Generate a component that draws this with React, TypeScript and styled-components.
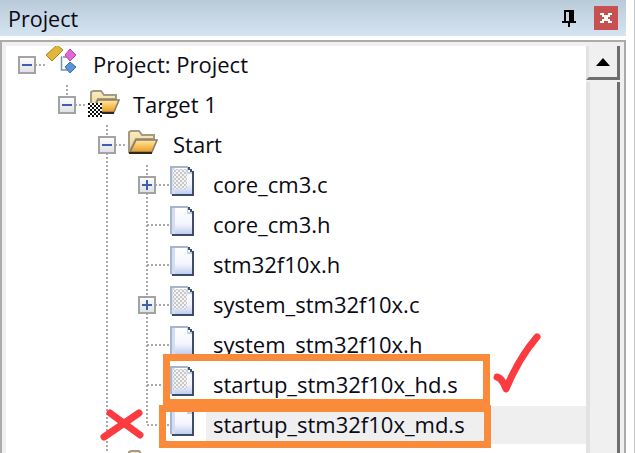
import React from 'react';
import styled, { createGlobalStyle } from 'styled-components';

const GlobalStyle = createGlobalStyle`
  html, body {
    margin: 0;
    padding: 0;
    overflow: hidden;
    background: #fff;
  }
`;

const dots = '#aaaaaa';
const vDots = `repeating-linear-gradient(to bottom, ${dots} 0 2px, transparent 2px 4px)`;
const hDots = `repeating-linear-gradient(to right, ${dots} 0 2px, transparent 2px 4px)`;

const Page = styled.div`
  position: relative;
  box-sizing: border-box;
  width: 635px;
  height: 453px;
  overflow: hidden;
  padding-right: 8px;
  border-right: 1px solid #c4c4c4;
  font-family: 'Open Sans', 'Liberation Sans', sans-serif;
  color: #0a0a14;
`;

const Frame = styled.div`
  display: flex;
  flex-direction: column;
  height: 100%;
`;

const TitleBar = styled.div`
  display: flex;
  align-items: center;
  flex: 0 0 36px;
  padding: 0 8px;
  background: linear-gradient(to bottom, #b9cad9, #d6e4f1);
  font-size: 21.5px;
`;

const Title = styled.span`
  flex: 1;
`;

const PinButton = styled.span`
  display: flex;
  margin-right: 18px;
`;

const CloseButton = styled.span`
  display: flex;
  align-items: center;
  justify-content: center;
  width: 24px;
  height: 24px;
  background: #c75050;
`;

const Panel = styled.div`
  display: flex;
  flex: 1;
  min-height: 0;
  margin-top: 4px;
  padding: 4px 4px 0;
  border: solid #ababab;
  border-width: 2px 2px 0;
  background: #f0f0f0;
`;

const Tree = styled.div`
  flex: 1;
  overflow: hidden;
  background: #fff;
`;

const RowList = styled.div`
  margin-top: -1px;
`;

const Row = styled.div`
  display: flex;
  align-items: center;
  height: 40px;
  padding-left: 1px;
`;

const Indent = styled.div<{ $line?: boolean }>`
  flex: 0 0 40px;
  align-self: stretch;
  background: ${p => (p.$line ? `${vDots} center / 2px 100% no-repeat` : 'none')};
`;

const Connector = styled.div<{ $kind: 'root' | 'tee' | 'last' }>`
  display: flex;
  align-items: center;
  justify-content: center;
  flex: 0 0 40px;
  align-self: stretch;
  background:
    ${hDots} right center / 20px 2px no-repeat,
    ${p =>
      p.$kind === 'root'
        ? 'none'
        : p.$kind === 'tee'
          ? `${vDots} center / 2px 100% no-repeat`
          : `${vDots} center top / 2px 50% no-repeat`};
`;

const Expander = styled.span`
  box-sizing: border-box;
  display: flex;
  align-items: center;
  justify-content: center;
  width: 18px;
  height: 18px;
  border: 2px solid #a3a3a3;
  background: linear-gradient(to bottom, #fdfdfd, #dfe1e4);
`;

const IconSlot = styled.div<{ $stub?: boolean }>`
  display: flex;
  flex: 0 0 39px;
  align-self: stretch;
  box-sizing: border-box;
  align-items: flex-start;
  padding-top: ${p => (p.$stub ? 1 : 5)}px;
  padding-left: ${p => (p.$stub ? 3 : 1)}px;
  background: ${p => (p.$stub ? `${hDots} left center / 3px 2px no-repeat` : 'none')};
`;

const ProjectSlot = styled(IconSlot)`
  padding-top: 0;
  padding-left: 0;
  margin-left: -1px;
  margin-right: 1px;
`;

const Label = styled.div<{ $selected?: boolean }>`
  flex: 1;
  height: 38px;
  padding-left: 7px;
  line-height: 36px;
  font-size: 22px;
  white-space: nowrap;
  background: ${p => (p.$selected ? '#efefef' : 'transparent')};
`;

const ScrollBar = styled.div`
  display: flex;
  flex-direction: column;
  flex: 0 0 34px;
  background: #f0f0f0;
`;

const ArrowButton = styled.div`
  display: flex;
  align-items: center;
  justify-content: center;
  flex: 0 0 34px;
  box-sizing: border-box;
  border: solid #e2e2e2;
  border-width: 0 0 0 3px;
  border-right: 3px solid #6e6e6e;
  border-bottom: 3px solid #6e6e6e;
`;

const Track = styled.div`
  flex: 1;
  margin-top: 2px;
  box-sizing: border-box;
  border-left: 4px solid #e2e2e2;
  border-right: 3px solid #6e6e6e;
`;

const FirstBox = styled.div`
  position: absolute;
  box-sizing: border-box;
  left: 163px;
  top: 354px;
  width: 327px;
  height: 52px;
  border: 7px solid #f98b3a;
`;

const SecondBox = styled.div`
  position: absolute;
  box-sizing: border-box;
  left: 159px;
  top: 405px;
  width: 332px;
  height: 43px;
  border: 7px solid #f98b3a;
`;

const Mark = styled.svg`
  position: absolute;
  left: 0;
  top: 0;
  pointer-events: none;
`;

const Minus = () => (
  <svg width="10" height="10" viewBox="0 0 10 10">
    <rect y="4" width="10" height="2" fill="#3f5fae" />
  </svg>
);

const Plus = () => (
  <svg width="10" height="10" viewBox="0 0 10 10">
    <rect y="4" width="10" height="2" fill="#3f5fae" />
    <rect x="4" width="2" height="10" fill="#3f5fae" />
  </svg>
);

const DocIcon = ({ source }: { source?: boolean }) => (
  <svg width="24" height="30" viewBox="0 0 24 30" shapeRendering="crispEdges">
    <defs>
      <linearGradient id="docFill" x1="0" y1="0" x2="0" y2="1">
        <stop offset="0" stopColor="#ffffff" />
        <stop offset="0.6" stopColor="#f4f6fd" />
        <stop offset="1" stopColor="#bcc9ee" />
      </linearGradient>
      <pattern id="dither" width="4" height="4" patternUnits="userSpaceOnUse">
        <rect width="4" height="4" fill="#f4f4f4" />
        <rect width="2" height="2" fill="#c8c8c8" />
        <rect x="2" y="2" width="2" height="2" fill="#c8c8c8" />
      </pattern>
    </defs>
    <path d="M1 1H17L23 7V29H1Z" fill="url(#docFill)" />
    <rect x="2" y="2" width="3" height="26" fill="#d5ddf2" />
    {source && <rect x="3" y="3" width="14" height="20" fill="url(#dither)" />}
    <path d="M0 0H18V2H2V28H0Z" fill="#a6b5cc" />
    <path d="M18 2V6H22V8H17V2Z" fill="#c5d0e6" />
    <path d="M18 1H20V3H22V5H24V30H2V28H22V6H20V4H18Z" fill="#3d4d68" />
  </svg>
);

const FolderIcon = () => (
  <svg width="30" height="24" viewBox="0 0 30 24">
    <defs>
      <linearGradient id="folderBack" x1="0" y1="0" x2="0" y2="1">
        <stop offset="0" stopColor="#fdeebc" />
        <stop offset="1" stopColor="#e6cd92" />
      </linearGradient>
      <linearGradient id="folderFront" x1="0" y1="0" x2="0" y2="1">
        <stop offset="0" stopColor="#ffe9a0" />
        <stop offset="1" stopColor="#f09a1e" />
      </linearGradient>
    </defs>
    <path d="M1 23V2L3 1H11L14 5H26V9H8L1 23Z" fill="url(#folderBack)" stroke="#a39a88" strokeWidth="2" />
    <path d="M8 10H29L24 22H2Z" fill="url(#folderFront)" stroke="#8a7f66" strokeWidth="1.6" />
    <path d="M1 23H24" stroke="#2c2a22" strokeWidth="2" />
  </svg>
);

const TargetIcon = () => (
  <svg width="34" height="28" viewBox="0 0 34 28">
    <g transform="translate(2 0)">
      <FolderIcon />
    </g>
    <g shapeRendering="crispEdges">
      <rect x="0" y="13" width="14" height="13" fill="#fff" />
      {Array.from({ length: 7 }).map((_, r) =>
        Array.from({ length: 7 }).map((_, c) =>
          (r + c) % 2 === 0 ? (
            <rect key={`${r}-${c}`} x={c * 2} y={13 + r * 2} width="2" height="2" fill="#111" />
          ) : null,
        ),
      )}
    </g>
  </svg>
);

const ProjectIcon = () => (
  <svg width="32" height="30" viewBox="0 0 32 30">
    <path d="M15 12H15.5V25H22M17 12H21" fill="none" stroke="#7c8da6" strokeWidth="1.5" />
    <path d="M0 10L11 0L17 5L6 16Z" fill="#e3b63a" stroke="#a88420" strokeWidth="1" />
    <path d="M24 4L30 10L24 16L19 10Z" fill="#e267d8" stroke="#b24aa8" strokeWidth="1" />
    <path d="M24 17L30 22L24 28L19 22Z" fill="#5b93dc" stroke="#3c6cb0" strokeWidth="1" />
  </svg>
);

const PinIcon = () => (
  <svg width="14" height="17" viewBox="0 0 14 17" shapeRendering="crispEdges">
    <path d="M2 0H12V11H14V13H8V17H6V13H0V11H2ZM4 2V11H7V2Z" fill="#000" fillRule="evenodd" />
  </svg>
);

const CloseIcon = () => (
  <svg width="12" height="10" viewBox="0 0 12 10" shapeRendering="crispEdges">
    <path d="M0 0H4V2H8V0H12V2H10V4H8V6H10V8H12V10H8V8H4V10H0V8H2V6H4V4H2V2H0Z" fill="#fff" />
  </svg>
);

const UpArrow = () => (
  <svg width="14" height="8" viewBox="0 0 14 8">
    <path d="M7 0L14 8H0Z" fill="#000" />
  </svg>
);

type FileRow = { name: string; source?: boolean; plus?: boolean; last?: boolean; selected?: boolean };

const files: FileRow[] = [
  { name: 'core_cm3.c', source: true, plus: true },
  { name: 'core_cm3.h' },
  { name: 'stm32f10x.h' },
  { name: 'system_stm32f10x.c', source: true, plus: true },
  { name: 'system_stm32f10x.h' },
  { name: 'startup_stm32f10x_hd.s', source: true },
  { name: 'startup_stm32f10x_md.s', last: true, selected: true },
];

export default function App() {
  return (
    <Page>
      <GlobalStyle />
      <Frame>
        <TitleBar>
          <Title>Project</Title>
          <PinButton>
            <PinIcon />
          </PinButton>
          <CloseButton>
            <CloseIcon />
          </CloseButton>
        </TitleBar>
        <Panel>
          <Tree>
            <RowList>
              <Row>
                <Connector $kind="root">
                  <Expander>
                    <Minus />
                  </Expander>
                </Connector>
                <ProjectSlot>
                  <ProjectIcon />
                </ProjectSlot>
                <Label>Project: Project</Label>
              </Row>
              <Row>
                <Indent />
                <Connector $kind="last">
                  <Expander>
                    <Minus />
                  </Expander>
                </Connector>
                <IconSlot>
                  <TargetIcon />
                </IconSlot>
                <Label>Target 1</Label>
              </Row>
              <Row>
                <Indent />
                <Indent />
                <Connector $kind="tee">
                  <Expander>
                    <Minus />
                  </Expander>
                </Connector>
                <IconSlot>
                  <FolderIcon />
                </IconSlot>
                <Label>Start</Label>
              </Row>
              {files.map(file => (
                <Row key={file.name}>
                  <Indent />
                  <Indent />
                  <Indent $line />
                  <Connector $kind={file.last ? 'last' : 'tee'}>
                    {file.plus && (
                      <Expander>
                        <Plus />
                      </Expander>
                    )}
                  </Connector>
                  <IconSlot $stub>
                    <DocIcon source={file.source} />
                  </IconSlot>
                  <Label $selected={file.selected}>{file.name}</Label>
                </Row>
              ))}
              <Row>
                <Indent />
                <Indent />
                <Connector $kind="tee" />
                <IconSlot>
                  <FolderIcon />
                </IconSlot>
              </Row>
            </RowList>
          </Tree>
          <ScrollBar>
            <ArrowButton>
              <UpArrow />
            </ArrowButton>
            <Track />
          </ScrollBar>
        </Panel>
      </Frame>
      <FirstBox />
      <SecondBox />
      <Mark width="635" height="453" viewBox="0 0 635 453">
        <g fill="none" stroke="#fb3b40" strokeWidth="7" strokeLinecap="round" strokeLinejoin="round">
          <path d="M110 413L140 435M139 413L104 437" />
          <path d="M497 377C501 378 504 383 506 389C513 372 524 352 537 337" />
        </g>
      </Mark>
    </Page>
  );
}
